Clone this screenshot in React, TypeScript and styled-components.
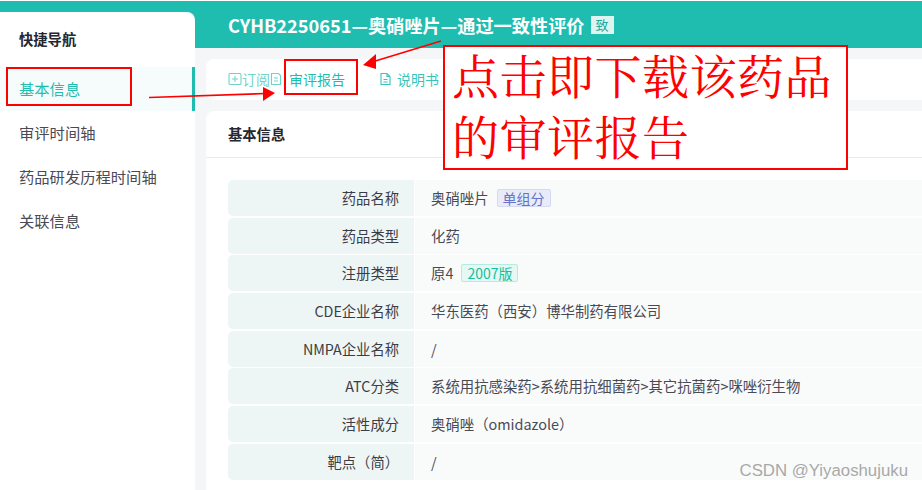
import React from "react";
import styled, { createGlobalStyle } from "styled-components";

const GlobalStyle = createGlobalStyle`
  html, body {
    margin: 0;
    padding: 0;
    background: #fff;
  }
  body {
    font-family: "Noto Sans CJK SC", "Open Sans", "Liberation Sans", sans-serif;
    overflow: hidden;
  }
`;

const NAV_ITEMS = ["基本信息", "审评时间轴", "药品研发历程时间轴", "关联信息"];

const App: React.FC = () => {
  return (
    <>
      <GlobalStyle />
      <Page>
        <Sidebar>
          <SideTitle>快捷导航</SideTitle>
          {NAV_ITEMS.map((item, i) => (
            <NavItem key={item} active={i === 0}>
              {item}
            </NavItem>
          ))}
        </Sidebar>

        <Main>
          <TitleBar>
            <Title>CYHB2250651—奥硝唑片—通过一致性评价</Title>
            <TitleBadge>致</TitleBadge>
          </TitleBar>

          <Toolbar>
            <ToolLink>
              <svg width="14" height="14" viewBox="0 0 14 14" fill="none" stroke="currentColor" strokeWidth="1.1">
                <rect x="1" y="1.5" width="12" height="11" rx="1" />
                <path d="M4 7h6M7 4v6" />
              </svg>
              订阅
            </ToolLink>
            <ToolLink>
              <svg width="12" height="14" viewBox="0 0 12 14" fill="none" stroke="currentColor" strokeWidth="1.1">
                <path d="M1.5 1.5h7l2 2v9h-9zM4 6h4M4 9h4" />
              </svg>
            </ToolLink>
            <ReportLink>审评报告</ReportLink>
            <ManualLink>
              <svg width="13" height="14" viewBox="0 0 13 14" fill="none" stroke="currentColor" strokeWidth="1.1">
                <path d="M2 1.5h6l3 3v8H2zM8 1.5v3h3M4.5 7.5h4M4.5 10h4" />
              </svg>
              说明书
            </ManualLink>
          </Toolbar>

          <Card>
            <CardHead>基本信息</CardHead>
            <InfoTable>
              <InfoRow>
                <InfoLabel>药品名称</InfoLabel>
                <InfoValue>
                  奥硝唑片<Tag tone="blue">单组分</Tag>
                </InfoValue>
              </InfoRow>
              <InfoRow>
                <InfoLabel>药品类型</InfoLabel>
                <InfoValue>化药</InfoValue>
              </InfoRow>
              <InfoRow>
                <InfoLabel>注册类型</InfoLabel>
                <InfoValue>
                  原4<Tag tone="green">2007版</Tag>
                </InfoValue>
              </InfoRow>
              <InfoRow>
                <InfoLabel>CDE企业名称</InfoLabel>
                <InfoValue>华东医药（西安）博华制药有限公司</InfoValue>
              </InfoRow>
              <InfoRow>
                <InfoLabel>NMPA企业名称</InfoLabel>
                <InfoValue>/</InfoValue>
              </InfoRow>
              <InfoRow>
                <InfoLabel>ATC分类</InfoLabel>
                <InfoValue>系统用抗感染药&gt;系统用抗细菌药&gt;其它抗菌药&gt;咪唑衍生物</InfoValue>
              </InfoRow>
              <InfoRow>
                <InfoLabel>活性成分</InfoLabel>
                <InfoValue>奥硝唑（omidazole）</InfoValue>
              </InfoRow>
              <InfoRow>
                <InfoLabel>靶点（简）</InfoLabel>
                <InfoValue>/</InfoValue>
              </InfoRow>
            </InfoTable>
          </Card>
        </Main>

        <NavMark />
        <ReportMark />
        <Callout>
          <CalloutText>点击即下载该药品的审评报告</CalloutText>
        </Callout>
        <Arrows width="922" height="490" viewBox="0 0 922 490">
          <path d="M149 97.5L266 93.5" stroke="#f00" strokeWidth="1.6" />
          <path d="M263 87L275 93L263 101z" fill="#f00" />
          <path d="M441 41L372 62" stroke="#f00" strokeWidth="1.6" />
          <path d="M376 54L363 65L376 69z" fill="#f00" />
        </Arrows>
        <Watermark>CSDN @Yiyaoshujuku</Watermark>
      </Page>
    </>
  );
};

const Page = styled.div`
  position: relative;
  display: flex;
  align-items: stretch;
  width: 922px;
  height: 490px;
  box-sizing: border-box;
  padding-top: 12px;
  overflow: hidden;
  background: linear-gradient(#fff 1px, #1fbdb0 1px, #1fbdb0 48px, #f5f6f8 48px);
`;

const Sidebar = styled.aside`
  flex: 0 0 195px;
  background: #fff;
  border-radius: 0 8px 0 0;
`;

const SideTitle = styled.div`
  height: 55px;
  box-sizing: border-box;
  padding-left: 19px;
  line-height: 53px;
  font-size: 14.3px;
  font-weight: 700;
  color: #26262e;
`;

const NavItem = styled.div<{ active?: boolean }>`
  height: 44px;
  box-sizing: border-box;
  padding-left: 19px;
  line-height: 42px;
  font-size: 15.3px;
  color: ${(p) => (p.active ? "#1fbdb0" : "#4a4a55")};
  background: ${(p) => (p.active ? "#f6fcfb" : "transparent")};
  border-right: 3px solid ${(p) => (p.active ? "#1fbdb0" : "transparent")};
`;

const Main = styled.main`
  flex: 1;
  min-width: 0;
  display: flex;
  flex-direction: column;
  margin-top: -12px;
  padding-left: 11px;
`;

const TitleBar = styled.div`
  display: flex;
  align-items: center;
  gap: 6px;
  height: 48px;
  flex: none;
  padding: 1px 0 0 22px;
  box-sizing: border-box;
  color: #fff;
`;

const Title = styled.h1`
  margin: 0;
  font-size: 18.2px;
  font-weight: 700;
  white-space: nowrap;
`;

const TitleBadge = styled.span`
  width: 23px;
  height: 18px;
  background: #dff3f0;
  color: #1fa99c;
  font-size: 13px;
  line-height: 18px;
  text-align: center;
`;

const Toolbar = styled.div`
  display: flex;
  align-items: center;
  flex: none;
  height: 41px;
  box-sizing: border-box;
  margin-top: 11px;
  padding: 0 0 2px 22px;
  background: #fff;
  border-radius: 8px 0 0 8px;
  font-size: 14px;
  color: #1fbdb0;
`;

const ToolLink = styled.span`
  display: inline-flex;
  align-items: center;
  gap: 0;
  color: #6fd3ca;
`;

const ReportLink = styled.span`
  margin-left: 7px;
`;

const ManualLink = styled.span`
  display: inline-flex;
  align-items: center;
  gap: 5px;
  margin-left: 34px;
  color: #38c4b8;
`;

const Card = styled.section`
  flex: 1;
  margin-top: 11px;
  background: #fff;
  border-radius: 8px 0 0 0;
`;

const CardHead = styled.div`
  height: 47px;
  box-sizing: border-box;
  padding-left: 22px;
  line-height: 45px;
  font-size: 14.3px;
  font-weight: 700;
  color: #26262e;
  border-bottom: 1px solid #ebebed;
`;

const InfoTable = styled.div`
  display: flex;
  flex-direction: column;
  gap: 1.7px;
  margin: 22px 0 0 22px;
`;

const InfoRow = styled.div`
  display: flex;
  height: 36px;
  font-size: 14.3px;
`;

const InfoLabel = styled.div`
  flex: 0 0 186px;
  box-sizing: border-box;
  padding-right: 15px;
  text-align: right;
  line-height: 35px;
  color: #3c3c46;
  background: #eef6f5;
  border-radius: 5px 0 0 5px;
  margin-right: 1px;
`;

const InfoValue = styled.div`
  flex: 1;
  display: flex;
  align-items: center;
  padding: 0 0 1px 16px;
  font-size: 14.4px;
  color: #4a4a55;
  background: #f9fbfb;
`;

const Tag = styled.span<{ tone: "blue" | "green" }>`
  margin-left: 8px;
  padding: 0 5px;
  height: 18px;
  line-height: 16px;
  box-sizing: border-box;
  font-size: 14px;
  border-radius: 2px;
  border: 1px solid ${(p) => (p.tone === "blue" ? "#d5d9f2" : "#b5ecdf")};
  background: ${(p) => (p.tone === "blue" ? "#e9ebf8" : "#e6f8f4")};
  color: ${(p) => (p.tone === "blue" ? "#6672c8" : "#14c09a")};
`;

/* red annotations drawn over the screenshot */
const NavMark = styled.div`
  position: absolute;
  left: 6px;
  top: 67px;
  width: 126px;
  height: 39px;
  border: 2px solid #f00;
  box-sizing: border-box;
`;

const ReportMark = styled.div`
  position: absolute;
  left: 284px;
  top: 59px;
  width: 74px;
  height: 36px;
  border: 2px solid #f00;
  box-sizing: border-box;
`;

const Callout = styled.div`
  position: absolute;
  left: 443px;
  top: 45px;
  width: 405px;
  height: 125px;
  box-sizing: border-box;
  padding-left: 7px;
  border: 2px solid #f00;
  background: #fff;
  color: #f00;
  font-family: "Noto Serif CJK SC", "Liberation Serif", "Noto Sans CJK SC", serif;
  font-size: 47px;
  line-height: 61px;
  letter-spacing: 0.5px;
`;

const CalloutText = styled.div`
  margin-top: -4px;
`;

const Arrows = styled.svg`
  position: absolute;
  left: 0;
  top: 0;
  pointer-events: none;
`;

const Watermark = styled.div`
  position: absolute;
  right: 14px;
  top: 461px;
  font-family: "Liberation Sans", sans-serif;
  font-size: 16.8px;
  color: #9a9a9a;
  opacity: 0.85;
`;

export default App;
